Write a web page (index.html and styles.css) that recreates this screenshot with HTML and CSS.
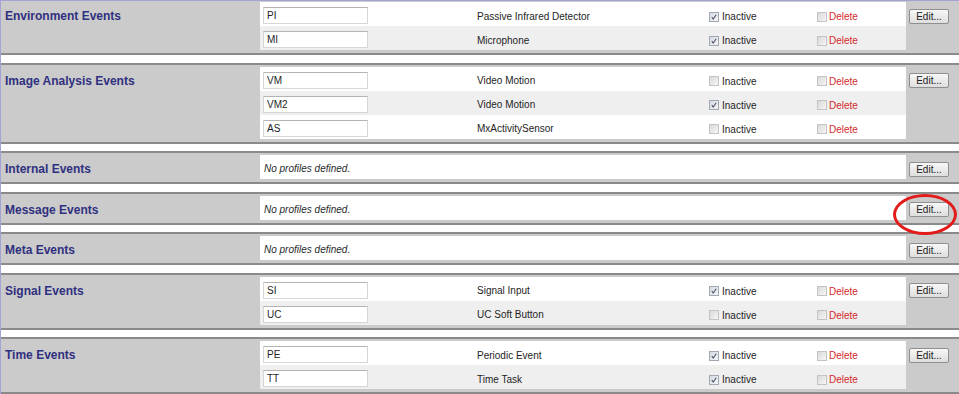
FILE: index.html
```html
<!DOCTYPE html>
<html>
<head>
<meta charset="utf-8">
<link rel="stylesheet" href="styles.css">
</head>
<body>
<div class="page">

  <section class="group">
    <div class="title">Environment Events</div>
    <div class="rows">
      <div class="row">
        <div class="c-code"><input class="code" value="PI"></div>
        <div class="c-desc">Passive Infrared Detector</div>
        <div class="c-inact"><span class="cb on"><svg viewBox="0 0 10 10"><polyline points="2.2,5 4,7.6 7.8,2.2"/></svg></span><span>Inactive</span></div>
        <div class="c-del"><span class="cb"></span><span class="del">Delete</span></div>
      </div>
      <div class="row">
        <div class="c-code"><input class="code" value="MI"></div>
        <div class="c-desc">Microphone</div>
        <div class="c-inact"><span class="cb on"><svg viewBox="0 0 10 10"><polyline points="2.2,5 4,7.6 7.8,2.2"/></svg></span><span>Inactive</span></div>
        <div class="c-del"><span class="cb"></span><span class="del">Delete</span></div>
      </div>
    </div>
    <div class="edit"><button class="btn">Edit...</button></div>
  </section>

  <section class="group">
    <div class="title">Image Analysis Events</div>
    <div class="rows">
      <div class="row">
        <div class="c-code"><input class="code" value="VM"></div>
        <div class="c-desc">Video Motion</div>
        <div class="c-inact"><span class="cb"></span><span>Inactive</span></div>
        <div class="c-del"><span class="cb"></span><span class="del">Delete</span></div>
      </div>
      <div class="row">
        <div class="c-code"><input class="code" value="VM2"></div>
        <div class="c-desc">Video Motion</div>
        <div class="c-inact"><span class="cb on"><svg viewBox="0 0 10 10"><polyline points="2.2,5 4,7.6 7.8,2.2"/></svg></span><span>Inactive</span></div>
        <div class="c-del"><span class="cb"></span><span class="del">Delete</span></div>
      </div>
      <div class="row">
        <div class="c-code"><input class="code" value="AS"></div>
        <div class="c-desc">MxActivitySensor</div>
        <div class="c-inact"><span class="cb"></span><span>Inactive</span></div>
        <div class="c-del"><span class="cb"></span><span class="del">Delete</span></div>
      </div>
    </div>
    <div class="edit"><button class="btn">Edit...</button></div>
  </section>

  <section class="group">
    <div class="title">Internal Events</div>
    <div class="rows">
      <div class="row empty">No profiles defined.</div>
    </div>
    <div class="edit"><button class="btn">Edit...</button></div>
  </section>

  <section class="group">
    <div class="title">Message Events</div>
    <div class="rows">
      <div class="row empty">No profiles defined.</div>
    </div>
    <div class="edit"><button class="btn">Edit...</button><span class="mark"></span></div>
  </section>

  <section class="group">
    <div class="title">Meta Events</div>
    <div class="rows">
      <div class="row empty">No profiles defined.</div>
    </div>
    <div class="edit"><button class="btn">Edit...</button></div>
  </section>

  <section class="group">
    <div class="title">Signal Events</div>
    <div class="rows">
      <div class="row">
        <div class="c-code"><input class="code" value="SI"></div>
        <div class="c-desc">Signal Input</div>
        <div class="c-inact"><span class="cb on"><svg viewBox="0 0 10 10"><polyline points="2.2,5 4,7.6 7.8,2.2"/></svg></span><span>Inactive</span></div>
        <div class="c-del"><span class="cb"></span><span class="del">Delete</span></div>
      </div>
      <div class="row">
        <div class="c-code"><input class="code" value="UC"></div>
        <div class="c-desc">UC Soft Button</div>
        <div class="c-inact"><span class="cb"></span><span>Inactive</span></div>
        <div class="c-del"><span class="cb"></span><span class="del">Delete</span></div>
      </div>
    </div>
    <div class="edit"><button class="btn">Edit...</button></div>
  </section>

  <section class="group">
    <div class="title">Time Events</div>
    <div class="rows">
      <div class="row">
        <div class="c-code"><input class="code" value="PE"></div>
        <div class="c-desc">Periodic Event</div>
        <div class="c-inact"><span class="cb on"><svg viewBox="0 0 10 10"><polyline points="2.2,5 4,7.6 7.8,2.2"/></svg></span><span>Inactive</span></div>
        <div class="c-del"><span class="cb"></span><span class="del">Delete</span></div>
      </div>
      <div class="row">
        <div class="c-code"><input class="code" value="TT"></div>
        <div class="c-desc">Time Task</div>
        <div class="c-inact"><span class="cb on"><svg viewBox="0 0 10 10"><polyline points="2.2,5 4,7.6 7.8,2.2"/></svg></span><span>Inactive</span></div>
        <div class="c-del"><span class="cb"></span><span class="del">Delete</span></div>
      </div>
    </div>
    <div class="edit"><button class="btn">Edit...</button></div>
  </section>

</div>
</body>
</html>
```

FILE: styles.css
```css
* { box-sizing: border-box; }

html, body {
  margin: 0;
  padding: 0;
  background: #ffffff;
  overflow: hidden;
}

body {
  font-family: "Liberation Sans", Arial, sans-serif;
  font-size: 10px;
  color: #1e1e1e;
}

.page {
  width: 959px;
  height: 394px;
  border-left: 1px solid #a3a3d6;
  border-top: 1px solid #a3a3d6;
}

.group {
  display: grid;
  grid-template-columns: 259px 1fr 53px;
  align-items: start;
  background: #cbcbcb;
  border-top: 2px solid #8a8a8a;
  border-bottom: 2px solid #8a8a8a;
  padding: 2px 0 3px;
  margin-top: 7.5px;
}

.group:first-child {
  border-top: 0;
  margin-top: 0;
  padding-top: 1px;
}

.title {
  height: 24px;
  line-height: 24px;
  padding-top: 2px;
  padding-left: 4px;
  font-size: 12px;
  font-weight: bold;
  color: #303080;
}

.rows {
  display: flex;
  flex-direction: column;
}

.row {
  height: 24px;
  padding-top: 3px;
  display: flex;
  align-items: center;
  background: #ffffff;
}

.row:nth-child(even) {
  background: #efefef;
}

.row.empty {
  padding-left: 4px;
  font-style: italic;
  color: #2a2a2a;
}

.c-code {
  width: 216px;
  padding-left: 3px;
  display: flex;
  align-items: center;
}

.code {
  width: 105px;
  height: 17px;
  margin: 0;
  padding: 0 0 0 3px;
  border: 1px solid #d6d6d6;
  border-top-color: #b4b4b4;
  background: #ffffff;
  font-family: "Liberation Sans", Arial, sans-serif;
  font-size: 10px;
  color: #1e1e1e;
  outline: none;
}

.c-desc {
  width: 233px;
  padding-left: 1px;
  padding-top: 1px;
}

.c-inact {
  width: 108px;
  display: flex;
  align-items: center;
  gap: 3px;
  padding-top: 2px;
}

.c-del {
  width: 89px;
  display: flex;
  align-items: center;
  gap: 2px;
  padding-top: 2px;
}

.del {
  color: #d42a2a;
}

.cb {
  width: 10px;
  height: 10px;
  flex: none;
  border: 1px solid #c4c4c4;
  background: linear-gradient(135deg, #d9d9d9, #f6f6f6);
  display: flex;
}

.cb.on {
  border-color: #a2a8b2;
  background: linear-gradient(135deg, #d6dbe3, #f3f5f8);
}

.cb svg {
  width: 8px;
  height: 8px;
}

.cb svg polyline {
  fill: none;
  stroke: #4b4f66;
  stroke-width: 1.3;
}

.edit {
  position: relative;
  height: 24px;
  display: flex;
  align-items: center;
  padding-left: 3px;
}

.btn {
  width: 40px;
  height: 15px;
  margin-top: 4px;
  padding: 0;
  border: 1px solid #8f8f8f;
  border-radius: 2px;
  background: linear-gradient(#f7f7f7, #dedede);
  font-family: "Liberation Sans", Arial, sans-serif;
  font-size: 10px;
  color: #222222;
  line-height: 13px;
}

.mark {
  position: absolute;
  left: -13px;
  top: -2px;
  width: 64px;
  height: 41px;
  border: 3px solid #e21b1b;
  border-radius: 50%;
}
```
